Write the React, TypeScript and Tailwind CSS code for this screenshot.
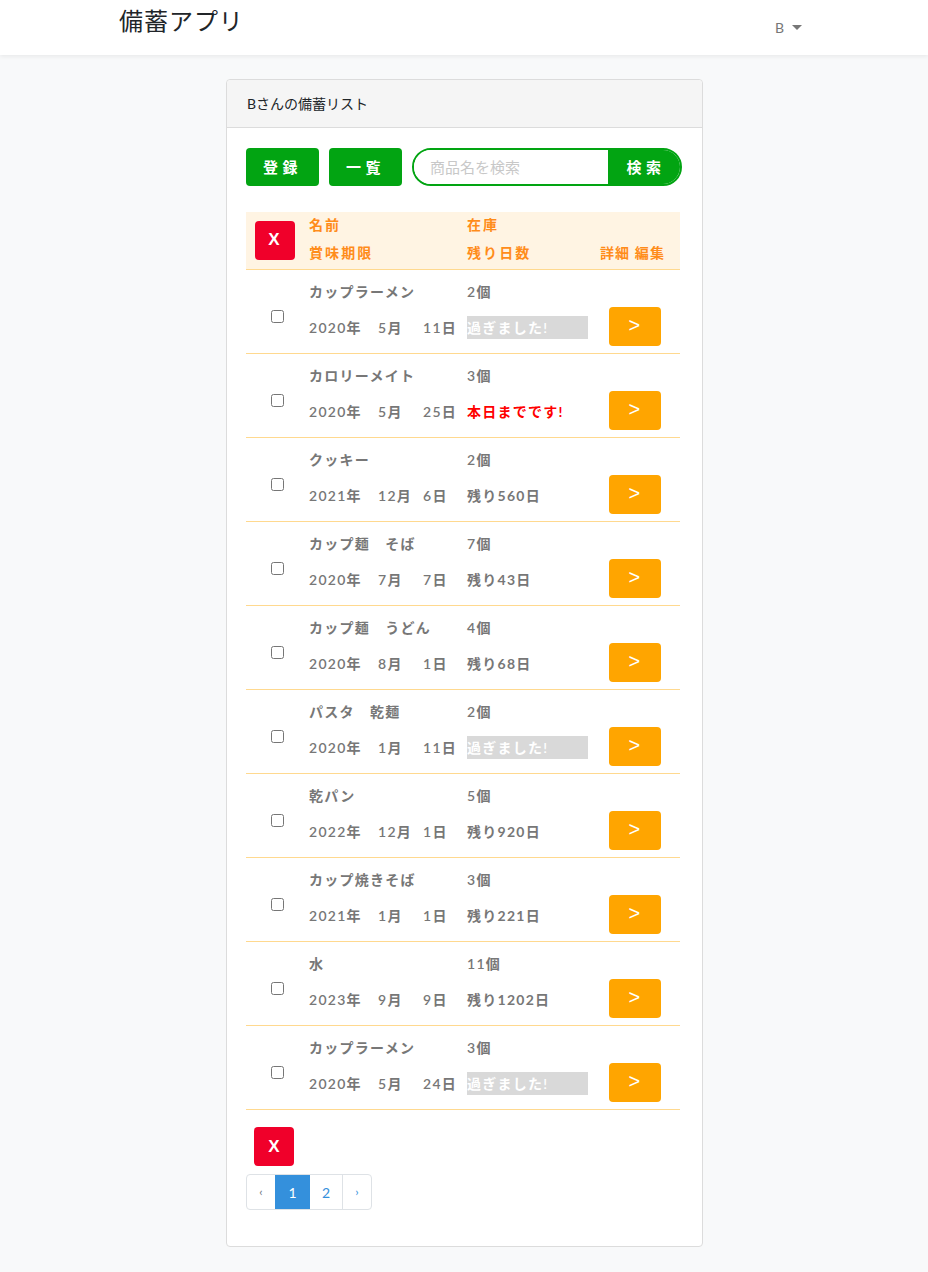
import React from 'react';

type Item = {
  name: string;
  qty: string;
  year: string;
  month: string;
  day: string;
  status: 'expired' | 'today' | 'left';
  left?: string;
};

const items: Item[] = [
  { name: 'カップラーメン', qty: '2個', year: '2020年', month: '5月', day: '11日', status: 'expired' },
  { name: 'カロリーメイト', qty: '3個', year: '2020年', month: '5月', day: '25日', status: 'today' },
  { name: 'クッキー', qty: '2個', year: '2021年', month: '12月', day: '6日', status: 'left', left: '残り560日' },
  { name: 'カップ麺　そば', qty: '7個', year: '2020年', month: '7月', day: '7日', status: 'left', left: '残り43日' },
  { name: 'カップ麺　うどん', qty: '4個', year: '2020年', month: '8月', day: '1日', status: 'left', left: '残り68日' },
  { name: 'パスタ　乾麺', qty: '2個', year: '2020年', month: '1月', day: '11日', status: 'expired' },
  { name: '乾パン', qty: '5個', year: '2022年', month: '12月', day: '1日', status: 'left', left: '残り920日' },
  { name: 'カップ焼きそば', qty: '3個', year: '2021年', month: '1月', day: '1日', status: 'left', left: '残り221日' },
  { name: '水', qty: '11個', year: '2023年', month: '9月', day: '9日', status: 'left', left: '残り1202日' },
  { name: 'カップラーメン', qty: '3個', year: '2020年', month: '5月', day: '24日', status: 'expired' },
];

const font = "font-['Lato','Noto_Sans_CJK_JP',sans-serif]";

const Status: React.FC<{ item: Item }> = ({ item }) => {
  if (item.status === 'expired') {
    return (
      <span className="block w-[121px] h-[23px] leading-[23px] bg-[#d9d9d9] text-white font-semibold">
        過ぎました!
      </span>
    );
  }
  if (item.status === 'today') {
    return <span className="text-[#ff0000]">本日までです!</span>;
  }
  return <span>{item.left}</span>;
};

const Divider = () => <div className="h-px bg-[#ffd98f]" />;

const Row: React.FC<{ item: Item }> = ({ item }) => (
  <>
    <div className="grid grid-cols-[59px_158px_133px_84px] grid-rows-[34px_49px] text-[14px] font-bold tracking-[0.09em] text-[#777]">
      <div className="row-span-2 flex items-center justify-center pt-[10px] pl-[3px]">
        <input type="checkbox" className="w-[13px] h-[13px]" />
      </div>
      <div className="pl-1 pt-[11px]">{item.name}</div>
      <div className="pl-1 pt-[11px] font-semibold">{item.qty}</div>
      <div className="row-span-2 flex items-end justify-start pl-[13px] pb-[7px]">
        <button className="w-[52px] h-[39px] rounded-[4px] bg-[#ffa500] text-white text-[20px] font-normal font-['Liberation_Sans',sans-serif] leading-none pb-[3px]">&gt;</button>
      </div>
      <div className="pl-1 flex items-center pb-[2px] font-semibold">
        <span className="inline-block w-[69px]">{item.year}</span>
        <span className="inline-block w-[45px]">{item.month}</span>
        <span>{item.day}</span>
      </div>
      <div className="pl-1 flex items-center pb-[2px]">
        <Status item={item} />
      </div>
    </div>
    <Divider />
  </>
);

const XButton: React.FC<{ className?: string }> = ({ className }) => (
  <button className={`w-10 h-[39px] rounded-[4px] bg-[#f0002a] text-white text-[17px] font-semibold font-['Liberation_Sans',sans-serif] ${className ?? ''}`}>
    X
  </button>
);

export default function App() {
  return (
    <div className={`min-h-[1272px] bg-[#f8f9fa] ${font}`}>
      <nav className="h-[55px] bg-white shadow-[0_2px_4px_rgba(0,0,0,0.06)] flex items-start justify-between pl-[119px] pr-[126px]">
        <div className="text-[24px] leading-[28px] pt-[6px] text-[#212529] font-['Noto_Sans_CJK_JP',sans-serif] tracking-[0.04em]">備蓄アプリ</div>
        <div className="pt-[17px] flex items-center gap-[8px] text-[14px] text-[#777]">
          B
          <span className="w-0 h-0 border-l-[5px] border-r-[5px] border-t-[5px] border-l-transparent border-r-transparent border-t-[#777]" />
        </div>
      </nav>

      <div className="pt-6 pb-6 pl-[226px]">
        <div className="w-[477px] bg-white border border-[#dcdcdc] rounded-[4px]">
          <div className="h-[48px] bg-[#f5f5f5] border-b border-[#dcdcdc] rounded-t-[4px] px-5 flex items-center text-[14px] text-[#212529]">
            Bさんの備蓄リスト
          </div>

          <div className="pl-[19px] pr-5 pt-5 pb-9">
            <div className="flex items-center gap-[10px] h-[38px]">
              <button className="w-[73px] h-[38px] rounded-[4px] bg-[#02a412] text-white text-[15px] font-bold tracking-[0.3em]">登録</button>
              <button className="w-[73px] h-[38px] rounded-[4px] bg-[#02a412] text-white text-[15px] font-bold tracking-[0.3em]">一覧</button>
              <div className="flex w-[270px] h-[38px] rounded-full border-2 border-[#02a412] overflow-hidden">
                <input
                  placeholder="商品名を検索"
                  className="flex-1 min-w-0 pl-4 text-[15px] text-[#333] placeholder:text-[#c8c8c8] outline-none bg-white"
                />
                <button className="w-[72px] bg-[#02a412] text-white text-[15px] font-bold tracking-[0.3em] pl-1">検索</button>
              </div>
            </div>

            <div className="mt-[26px] w-[434px]">
              <div className="grid grid-cols-[59px_158px_133px_84px] grid-rows-[24px_33px] bg-[#fff4e3] text-[14px] font-bold tracking-[0.15em] text-[#ff8c1a]">
                <div className="row-span-2 flex items-center pl-[9px] pb-[1px]">
                  <XButton />
                </div>
                <div className="pl-1 flex items-center">名前</div>
                <div className="pl-1 flex items-center">在庫</div>
                <div />
                <div className="pl-1 flex items-center">賞味期限</div>
                <div className="pl-1 flex items-center">残り日数</div>
                <div className="pl-[4px] flex items-center whitespace-nowrap tracking-[0.08em]">詳細 編集</div>
              </div>
              <Divider />
              {items.map((item, i) => (
                <Row key={i} item={item} />
              ))}
            </div>

            <XButton className="mt-[17px] ml-2" />

            <div className="mt-2 flex w-fit border border-[#dee2e6] rounded-[4px] text-[14px] h-9">
              <span className="w-[28px] flex items-center justify-center text-[#6c757d] text-[12px]">‹</span>
              <span className="w-[35px] flex items-center justify-center bg-[#3490dc] text-white">1</span>
              <span className="w-[33px] flex items-center justify-center text-[#3490dc] border-r border-[#dee2e6]">2</span>
              <span className="w-[28px] flex items-center justify-center text-[#3490dc] text-[12px]">›</span>
            </div>
          </div>
        </div>
      </div>
    </div>
  );
}
